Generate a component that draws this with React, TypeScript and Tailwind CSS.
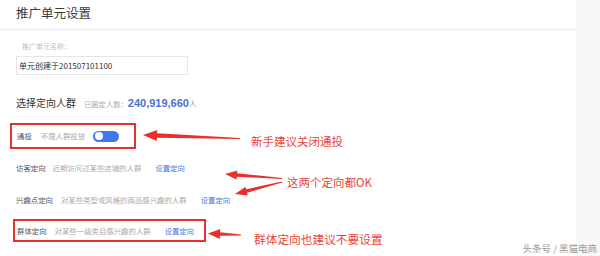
import React from "react"

const cjk = { fontFamily: '"Noto Sans CJK SC", "Noto Sans", sans-serif' }

type Pt = [number, number]

// tapered annotation arrow, tip -> tail
function arrowPoints(tip: Pt, tail: Pt, headLen = 13, headW = 5.5, shaft0 = 2, shaft1 = 0.4) {
  const dx = tail[0] - tip[0]
  const dy = tail[1] - tip[1]
  const len = Math.hypot(dx, dy)
  const ux = dx / len
  const uy = dy / len
  const px = -uy
  const py = ux
  const bx = tip[0] + ux * headLen
  const by = tip[1] + uy * headLen
  const p = (x: number, y: number) => `${x.toFixed(1)},${y.toFixed(1)}`
  return [
    p(tip[0], tip[1]),
    p(bx + px * headW, by + py * headW),
    p(bx + px * shaft0, by + py * shaft0),
    p(tail[0] + px * shaft1, tail[1] + py * shaft1),
    p(tail[0] - px * shaft1, tail[1] - py * shaft1),
    p(bx - px * shaft0, by - py * shaft0),
    p(bx - px * headW, by - py * headW),
  ].join(" ")
}

function Row({ label, desc, link = true, gap = "gap-[7px]" }: { label: string; desc: string; link?: boolean; gap?: string }) {
  return (
    <div className="flex items-center text-[7.4px] leading-[12px]">
      <span className={`flex items-center ${gap}`}>
        <span className="text-[#555]">{label}</span>
        <span className="text-[#aaa]">{desc}</span>
      </span>
      {link && <span className="ml-[14px] text-[#4a78e0]">设置定向</span>}
    </div>
  )
}

export default function App() {
  return (
    <div className="relative flex h-[256px] w-[600px] overflow-hidden bg-white" style={cjk}>
      <div className="w-[576px]">
        <div className="h-[30px] border-b border-[#ececec] pl-4 pt-[4px] text-[12.5px] leading-[17px] text-[#3a3a3a]">
          推广单元设置
        </div>

        <div className="pl-4 pt-[11px]">
          <div className="pl-[6px] text-[7px] leading-[10px] text-[#c0c0c0]">推广单元名称：</div>
          <div className="mt-[5px] flex h-[19px] w-[172px] items-center border border-[#e6e6e6] pl-[2px] text-[8px] text-[#333]">
            单元创建于201507101100
          </div>

          <div className="mt-[21px] flex items-baseline leading-[14px]">
            <span className="text-[10px] text-[#333]">选择定向人群</span>
            <span className="ml-[8px] text-[7.3px] text-[#aaa]">已圈定人数：</span>
            <span className="font-bold text-[11px] text-[#4a6fd8]" style={{ fontFamily: '"Liberation Sans", sans-serif' }}>
              240,919,660
            </span>
            <span className="text-[7.5px] text-[#999]">人</span>
          </div>

          <div className="-ml-[6px] mt-[12px] flex h-[26px] w-[126px] items-center border-2 border-[#e8302c] pl-[5px]">
            <Row label="通投" desc="不限人群投放" link={false} gap="gap-[9px]" />
            <div className="ml-[8px] flex h-[11px] w-[26px] items-center rounded-full bg-[#3f78ec] pl-[1.5px]">
              <div className="h-[8px] w-[8px] rounded-full bg-white" />
            </div>
          </div>

          <div className="mt-[13px]">
            <Row label="访客定向" desc="近期访问过某些店铺的人群" />
          </div>
          <div className="mt-[20px]">
            <Row label="兴趣点定向" desc="对某些类型或风格的商品感兴趣的人群" gap="gap-[8px]" />
          </div>

          <div className="-ml-[3px] mt-[13px] flex h-[23px] w-[193px] items-center border-2 border-[#e8302c] pl-[2px]">
            <Row label="群体定向" desc="对某些一级类目感兴趣的人群" gap="gap-[8px]" />
          </div>
        </div>
      </div>
      <div className="w-[24px] bg-[#f7f7f7]" />

      {/* annotations */}
      <svg className="absolute left-0 top-0" width="600" height="256">
        <g fill="#e8302c">
          <polygon points={arrowPoints([143, 135], [240, 138.5], 14, 5.5, 2.2, 0.5)} />
          <polygon points={arrowPoints([225, 174], [282, 178.5], 12, 4.5, 1.8, 0.5)} />
          <polygon points={arrowPoints([235, 194], [282, 182], 12, 4.5, 1.8, 0.5)} />
          <polygon points={arrowPoints([208, 233.5], [241, 235], 12, 5, 1.8, 0.5)} />
        </g>
      </svg>
      <div className="absolute left-[251px] top-[133px] text-[11.5px] leading-[16px] text-[#e8453c]">新手建议关闭通投</div>
      <div className="absolute left-[287px] top-[174px] text-[11.5px] leading-[16px] text-[#e8453c]">这两个定向都OK</div>
      <div className="absolute left-[254px] top-[231px] text-[11.7px] leading-[16px] text-[#e8453c]">群体定向也建议不要设置</div>
      <div className="absolute right-[3px] top-[241px] text-[9.5px] leading-[14px] text-[#9a9a9a]">头条号 / 黑猫电商</div>
    </div>
  )
}
